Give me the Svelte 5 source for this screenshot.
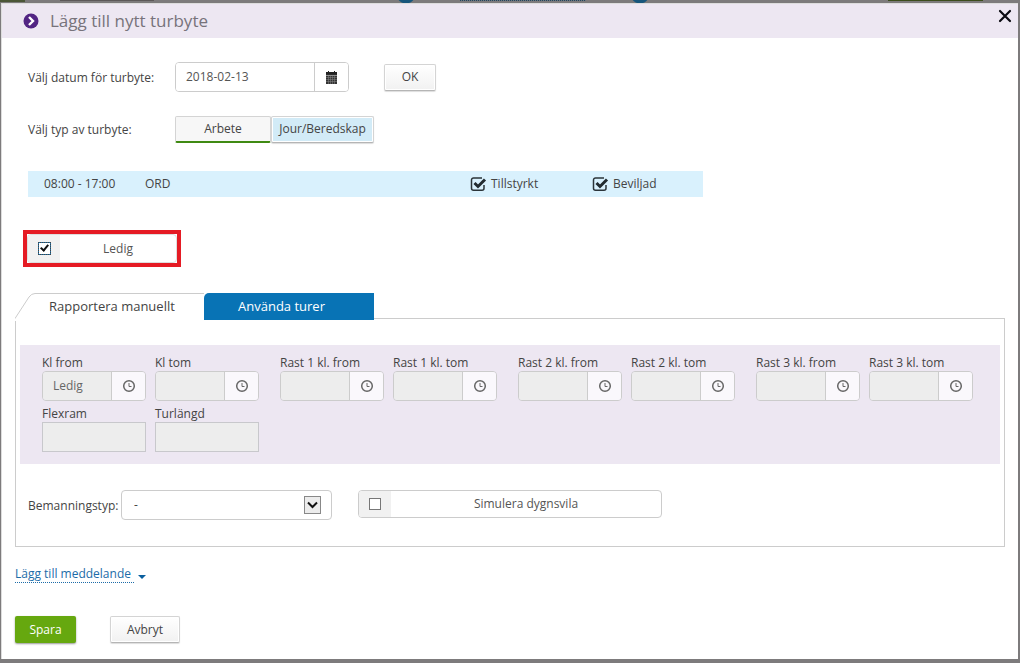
<script>
	let date = $state("2018-02-13");
	let type = $state("arbete");
	let tab = $state("manual");
	let free = $state(true);
	let simulate = $state(false);
	let staffing = $state("-");

	const groups = [
		[
			{ id: "kl-from", label: "Kl from", value: "Ledig", extra: { id: "flexram", label: "Flexram" } },
			{ id: "kl-tom", label: "Kl tom", value: "", extra: { id: "turlangd", label: "Turlängd" } }
		],
		...[1, 2, 3].map((n) => [
			{ id: `rast${n}-from`, label: `Rast ${n} kl. from`, value: "" },
			{ id: `rast${n}-tom`, label: `Rast ${n} kl. tom`, value: "" }
		])
	];
</script>

{#snippet checked(text)}
	<span class="status">
		<svg width="17" height="16" viewBox="0 0 17 16" aria-hidden="true">
			<path d="M14 9v3.2a2 2 0 0 1-2 2H3.500a2 2 0 0 1-2-2V4a2 2 0 0 1 2-2H12" fill="none" stroke="#2b3439" stroke-width="1.500" />
			<path d="M4.500 7l3.500 3.500L15 3.500" fill="none" stroke="#222b30" stroke-width="3" />
		</svg>
		{text}
	</span>
{/snippet}

<div class="backdrop">
	<div class="modal" role="dialog" aria-labelledby="title">
		<header>
			<svg width="16" height="16" viewBox="0 0 16 16" aria-hidden="true">
				<circle cx="8" cy="8" r="7.500" fill="#522583" />
				<path d="M6 4l4 4-4 4" fill="none" stroke="#fff" stroke-width="2.400" />
			</svg>
			<h1 id="title">Lägg till nytt turbyte</h1>
			<button class="close" aria-label="Stäng">
				<svg width="14" height="14" viewBox="0 0 14 14">
					<path d="M2 2l10 10M12 2L2 12" stroke="#0b0b12" stroke-width="2.200" stroke-linecap="round" />
				</svg>
			</button>
		</header>

		<div class="content">
			<div class="row">
				<label class="caption" for="date">Välj datum för turbyte:</label>
				<div class="group date">
					<input id="date" type="text" bind:value={date} />
					<button class="addon" aria-label="Kalender">
						<svg width="13" height="13" viewBox="0 0 13 13">
							<path d="M1 1h2V0h1v1h5V0h1v1h2v3H1z" fill="#222" />
							<path d="M1 4.500h11V13H1z" fill="#333" />
							<path d="M1 4.300h11M1 6.500h11M1 8.500h11M1 10.500h11M3.500 5v8M5.500 5v8M7.500 5v8M9.500 5v8" stroke="#888" stroke-width=".5" />
						</svg>
					</button>
				</div>
				<button class="btn ok">OK</button>
			</div>

			<div class="row types">
				<span class="caption">Välj typ av turbyte:</span>
				<button class="btn type work" aria-pressed={type === "arbete"} onclick={() => (type = "arbete")}>Arbete</button>
				<button class="btn type duty" aria-pressed={type === "jour"} onclick={() => (type = "jour")}>Jour/Beredskap</button>
			</div>

			<div class="shift">
				<span class="time">08:00 - 17:00</span>
				<span class="code">ORD</span>
				{@render checked("Tillstyrkt")}
				{@render checked("Beviljad")}
			</div>

			<div class="marked">
				<label class="check">
					<span class="box"><input type="checkbox" bind:checked={free} /></span>
					<span class="text">Ledig</span>
				</label>
			</div>

			<div class="tabs" role="tablist">
				<button class="tab manual" role="tab" aria-selected={tab === "manual"} onclick={() => (tab = "manual")}>
					<svg class="slope" width="20" height="28" viewBox="0 0 20 28" aria-hidden="true">
						<path d="M0 25.500L14 4Q16.500 .5 20 .5V28H0z" fill="#fff" />
						<path d="M0 25.500L14 4Q16.500 .5 20 .5" fill="none" stroke="#ccc" />
					</svg>
					<span>Rapportera manuellt</span>
				</button>
				<button class="tab turns" role="tab" aria-selected={tab === "turns"} onclick={() => (tab = "turns")}>Använda turer</button>
			</div>

			<section class="panel">
				<div class="times">
					{#each groups as group}
						<div class="pair">
							{#each group as field}
								<div class="field">
									<label for={field.id}>{field.label}</label>
									<div class="group">
										<input id={field.id} type="text" value={field.value} disabled />
										<button class="addon" aria-label="Välj tid">
											<svg width="14" height="14" viewBox="0 0 14 14">
												<circle cx="7" cy="7" r="5.300" fill="none" stroke="#666" stroke-width="1.500" />
												<path d="M7 4v3.500h2.500" fill="none" stroke="#666" />
											</svg>
										</button>
									</div>
									{#if field.extra}
										<label for={field.extra.id}>{field.extra.label}</label>
										<input class="plain" id={field.extra.id} type="text" disabled />
									{/if}
								</div>
							{/each}
						</div>
					{/each}
				</div>

				<div class="options">
					<label for="staffing">Bemanningstyp:</label>
					<div class="select">
						<select id="staffing" bind:value={staffing}>
							<option>-</option>
						</select>
						<span class="arrow">
							<svg width="11" height="8" viewBox="0 0 11 8" aria-hidden="true">
								<path d="M1 1.500l4.500 4.500L10 1.500" fill="none" stroke="#111" stroke-width="2" />
							</svg>
						</span>
					</div>
					<label class="check wide">
						<span class="box"><input type="checkbox" bind:checked={simulate} /></span>
						<span class="text">Simulera dygnsvila</span>
					</label>
				</div>
			</section>

			<a class="message" href="#meddelande">
				<span>Lägg till meddelande</span>
				<svg width="8" height="4" viewBox="0 0 8 4" aria-hidden="true"><path d="M0 0h8L4 4z" fill="#0a5f9e" /></svg>
			</a>

			<footer>
				<button class="btn save">Spara</button>
				<button class="btn cancel">Avbryt</button>
			</footer>
		</div>
	</div>
</div>

<style>
	:global(body) {
		background: #fff;
		font-family: "Open Sans", "Noto Sans", sans-serif;
		font-size: 12px;
		line-height: 18px;
		color: #444;
	}
	button, input, select {
		font: inherit;
		color: inherit;
		margin: 0;
		box-sizing: border-box;
	}
	button {
		padding: 0;
		cursor: pointer;
	}
	svg {
		display: block;
		flex: none;
	}
	.backdrop {
		margin-right: 4px;
		padding: 3px 2px 4px 1px;
		background:
			radial-gradient(circle at 406px -6px, #17567c 9px, transparent 10px),
			radial-gradient(circle at 640px -6px, #17567c 9px, transparent 10px),
			linear-gradient(#3c4d1c, #3c4d1c) 888px 0 / 95px 1px no-repeat,
			repeating-linear-gradient(90deg, #24465c 0 1px, #6f7880 1px 2px) 460px 0 / 126px 1px no-repeat,
			linear-gradient(#4b5637, #4b5637) 0 0 / 25px 2px no-repeat,
			linear-gradient(#5c5858, #5c5858) 60px 0 / 94px 1px no-repeat,
			#7d7b7c;
	}
	.modal {
		background: #fff;
		border: 1px solid #ddd;
		border-width: 1px 0 0 1px;
	}
	header {
		display: flex;
		align-items: center;
		height: 34px;
		padding-left: 21px;
		background: #ede7f2;
	}
	h1 {
		flex: 1;
		margin: 0 0 0 11px;
		font-size: 17px;
		line-height: 24px;
		font-weight: 400;
		color: #77737b;
	}
	.close {
		align-self: flex-start;
		margin: 5px 6px 0 0;
		border: 0;
		background: none;
	}
	.content {
		padding: 24px 13px 16px;
	}
	.row {
		display: flex;
		align-items: center;
		height: 30px;
		padding-left: 13px;
	}
	.types {
		margin-top: 22px;
	}
	.caption {
		width: 147px;
		padding-top: 1px;
	}
	.group {
		display: flex;
		height: 30px;
		box-sizing: border-box;
		border: 1px solid #ccc;
		border-radius: 4px;
		overflow: hidden;
	}
	.group input {
		flex: 1;
		min-width: 0;
		border: 0;
		padding: 0 10px;
		background: #fff;
		color: #555;
	}
	.group input:disabled {
		background: #ededed;
		color: #666;
	}
	.addon {
		display: grid;
		place-items: center;
		width: 34px;
		border: 0;
		border-left: 1px solid #ccc;
		background: #faf8fc;
	}
	.date {
		width: 174px;
	}
	.date .addon {
		background: #fff;
	}
	.btn {
		height: 27px;
		border: 1px solid #d4d4d4;
		border-bottom-color: #b5b5b5;
		border-radius: 2px;
		background: linear-gradient(#fff, #f1f1f1);
		box-shadow: inset 0 0 0 1px #fff, 0 1px 1px #ddd;
		color: #444;
	}
	.ok {
		width: 52px;
		margin-left: 35px;
	}
	.work {
		width: 96px;
		background: #f7f7f7;
		border-bottom: 2px solid #3f8a12;
		box-shadow: none;
	}
	.duty {
		width: 103px;
		background: #d2ebf7;
	}
	.shift {
		display: flex;
		align-items: center;
		width: 675px;
		height: 26px;
		margin: 27px 0 0 13px;
		padding-left: 16px;
		box-sizing: border-box;
		background: #d9f1fd;
	}
	.time {
		flex: none;
		width: 101px;
	}
	.code {
		flex: none;
		width: 325px;
	}
	.status {
		display: flex;
		flex: none;
		align-items: center;
		gap: 4px;
		width: 122px;
	}
	.marked {
		width: 158px;
		box-sizing: border-box;
		margin: 33px 0 0 8px;
		border: 4px solid #e51b24;
	}
	.check {
		display: flex;
		height: 28px;
		box-sizing: border-box;
		border: 1px solid #ccc;
		border-radius: 4px;
		overflow: hidden;
		color: #555;
	}
	.marked .check {
		border-color: #ddd;
		height: 29px;
	}
	.box {
		display: grid;
		place-items: center;
		width: 32px;
		background: #f1f1f1;
	}
	.box input {
		appearance: none;
		width: 12px;
		height: 12px;
		border: 1px solid #777;
		background: #fff;
	}
	.box input:checked {
		width: 13px;
		height: 13px;
		border: 1px solid #1b6fa5;
		outline: 1px dotted #444;
		outline-offset: -1px;
	}
	.box input:checked::after {
		content: "";
		display: block;
		width: 3px;
		height: 6px;
		margin: 0 auto;
		border: solid #111;
		border-width: 0 2px 2px 0;
		transform: rotate(40deg);
	}
	.text {
		flex: 1;
		align-self: center;
		text-align: center;
	}
	.tabs {
		display: flex;
		margin-top: 26px;
	}
	.tab {
		height: 27px;
		border: 0;
		font-size: 13px;
	}
	.manual {
		position: relative;
		z-index: 1;
		display: flex;
		width: 189px;
		background: none;
	}
	.manual span {
		flex: 1;
		height: 27px;
		line-height: 24px;
		box-sizing: border-box;
		border-top: 1px solid #ccc;
		background: #fff;
		padding-left: 14px;
		text-align: left;
	}
	.turns {
		width: 170px;
		border-radius: 5px 0 0 0;
		background: #0873b5;
		color: #fff;
		padding: 0 15px 2px 0;
		position: relative;
		z-index: 1;
	}
	.panel {
		margin-top: -2px;
		padding: 26px 4px 24px;
		border: 1px solid #ccc;
	}
	.times {
		display: flex;
		gap: 21px;
		padding: 9px 22px 12px;
		background: #ede7f2;
	}
	.pair {
		display: flex;
		gap: 9px;
	}
	.field {
		width: 104px;
	}
	.field label {
		display: block;
		line-height: 17px;
		white-space: nowrap;
	}
	.field .group {
		margin-bottom: 4px;
	}
	.plain {
		display: block;
		width: 100%;
		height: 30px;
		border: 1px solid #c8c8cc;
		background: #ededed;
	}
	.options {
		display: flex;
		align-items: flex-start;
		margin: 26px 0 0 8px;
	}
	.options > label:first-child {
		width: 93px;
		line-height: 32px;
	}
	.select {
		position: relative;
		width: 211px;
	}
	select {
		display: block;
		appearance: none;
		width: 100%;
		height: 30px;
		padding: 0 12px;
		border: 1px solid #ccc;
		border-radius: 4px;
		background: #fff;
	}
	.arrow {
		position: absolute;
		top: 6px;
		right: 11px;
		display: grid;
		place-items: center;
		width: 15px;
		height: 16px;
		border: 1px solid #888;
		background: #ececec;
		pointer-events: none;
	}
	.wide {
		width: 304px;
		margin-left: 26px;
	}
	.message {
		display: inline-flex;
		align-items: center;
		gap: 4px;
		margin-top: 19px;
		color: #1c6ca8;
		text-decoration: none;
	}
	.message span {
		line-height: 16px;
		padding-right: 3px;
		border-bottom: 1px dotted #1c6ca8;
	}
	.message svg {
		margin-top: 4px;
	}
	footer {
		display: flex;
		gap: 34px;
		margin-top: 33px;
	}
	.save {
		width: 61px;
		border: 0;
		background: #66a80f;
		box-shadow: 0 1px 2px #999;
		color: #fff;
	}
	.cancel {
		width: 70px;
	}
</style>
